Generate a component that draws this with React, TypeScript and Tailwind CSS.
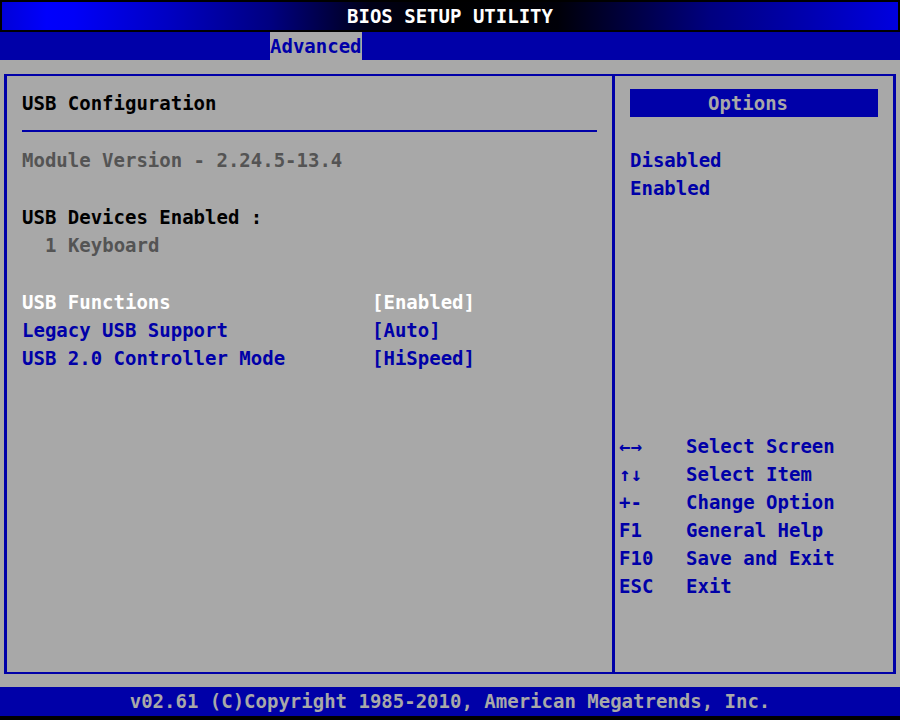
import { useState } from 'react';

interface Setting {
  id: string;
  label: string;
  choices: string[];
}

const settings: Setting[] = [
  { id: 'usb-functions', label: 'USB Functions', choices: ['Enabled', 'Disabled'] },
  { id: 'legacy-usb', label: 'Legacy USB Support', choices: ['Auto', 'Enabled', 'Disabled'] },
  { id: 'usb2-mode', label: 'USB 2.0 Controller Mode', choices: ['HiSpeed', 'FullSpeed'] },
];

const keys = [
  ['←→', 'Select Screen'],
  ['↑↓', 'Select Item'],
  ['+-', 'Change Option'],
  ['F1', 'General Help'],
  ['F10', 'Save and Exit'],
  ['ESC', 'Exit'],
];

export default function App() {
  const [active, setActive] = useState('usb-functions');

  return (
    <div className="flex min-h-screen flex-col bg-[#a8a8a8] font-['DejaVu_Sans_Mono',monospace] text-[19px] leading-7 font-bold text-[#0000a8]">
      <header>
        <div className="border-2 border-black bg-[linear-gradient(to_right,#0000d8_0%,#0000fc_5%,#0000f8_8%,#0000c0_19%,#000080_30%,#000018_41%,#000000_50%,#000008_62%,#000080_79%,#0000b0_90%,#0000e0_100%)]">
          <h1 className="text-center text-white">BIOS SETUP UTILITY</h1>
        </div>
        <nav className="flex bg-[#0000a8] pl-[30%]">
          <button type="button" className="bg-[#a8a8a8]">Advanced</button>
        </nav>
      </header>

      <main className="mx-1 mt-3.5 mb-[13px] flex grow border-x-3 border-y-2 border-[#0000a8]">
        <section className="flex grow flex-col px-[15px] pt-[13px]">
          <h2 className="text-black">USB Configuration</h2>
          <hr className="mt-[13px] mb-3.5 border-t-2 border-[#0000a8]" />
          <p className="text-[#545454]">Module Version - 2.24.5-13.4</p>
          <h3 className="mt-[29px] text-black">USB Devices Enabled :</h3>
          <p className="pl-[23px] text-[#545454]">1 Keyboard</p>

          <div className="mt-[29px] flex flex-col">
            {settings.map(s => (
              <div key={s.id} className={active === s.id ? 'flex text-white' : 'flex'}>
                <label htmlFor={s.id} className="w-[350px]">{s.label}</label>
                <select
                  id={s.id}
                  onFocus={() => setActive(s.id)}
                  className="appearance-none outline-none"
                >
                  {s.choices.map(c => (
                    <option key={c}>[{c}]</option>
                  ))}
                </select>
              </div>
            ))}
          </div>
        </section>

        <aside className="flex w-[281px] shrink-0 flex-col justify-between border-l-3 border-[#0000a8] pt-[13px]">
          <div className="px-[15px]">
            <h2 className="bg-[#0000a8] pr-3 text-center text-[#a8a8a8]">Options</h2>
            <ul className="mt-[29px]">
              <li>Disabled</li>
              <li>Enabled</li>
            </ul>
          </div>
          <dl className="mb-[72px] px-1">
            {keys.map(([key, action]) => (
              <div key={key} className="flex">
                <dt className="w-[67px]">{key}</dt>
                <dd>{action}</dd>
              </div>
            ))}
          </dl>
        </aside>
      </main>

      <footer className="border-b-4 border-black bg-[#0000a8] text-center leading-[29px] text-[#a8a8a8]">
        v02.61 (C)Copyright 1985-2010, American Megatrends, Inc.
      </footer>
    </div>
  );
}
